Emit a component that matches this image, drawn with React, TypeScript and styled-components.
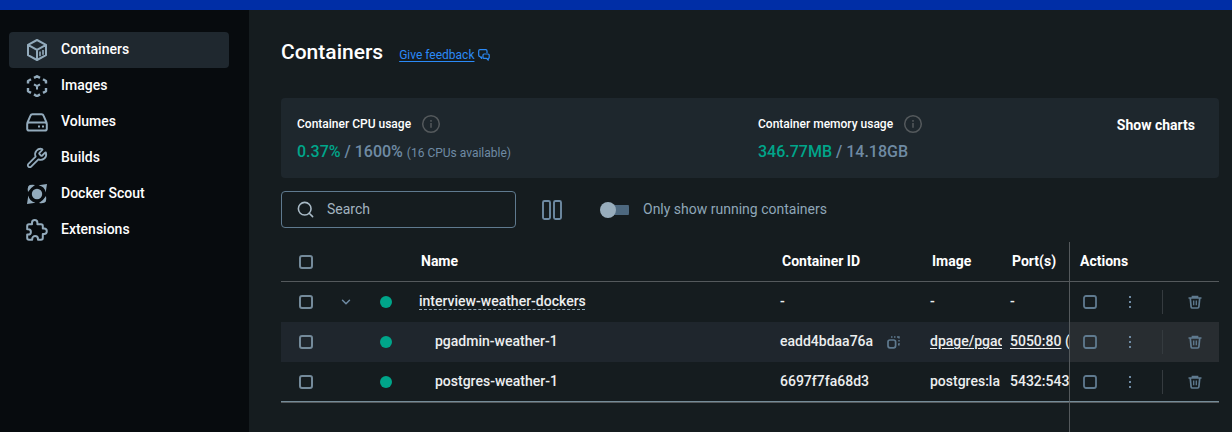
import React from "react";
import styled, { createGlobalStyle } from "styled-components";
import { Search, Wrench, ChevronDown } from "lucide-react";

const c = {
  bar: "#002ea6",
  side: "#070b0e",
  main: "#151c1f",
  panel: "#1e272d",
  active: "#1f282f",
  icon: "#93abbc",
  muted: "#6f8ba4",
  steel: "#5f7a8f",
  box: "#748a9a",
  green: "#00a58a",
  link: "#2b8af7",
  text: "#ffffff",
  cell: "#eceeef",
  line: "#54595c",
};

const Global = createGlobalStyle`
  * { box-sizing: border-box; }
  body {
    margin: 0;
    background: ${c.main};
    color: ${c.text};
    font-family: Roboto, "Liberation Sans", sans-serif;
    font-size: 14px;
    line-height: 20px;
  }
  button, input { font: inherit; color: inherit; }
  button { background: none; border: 0; padding: 0; cursor: pointer; }
  svg { display: block; flex: none; }
`;

const Shell = styled.div`
  display: flex;
  flex-direction: column;
  min-height: 100vh;
`;

const TopBar = styled.header`
  height: 10px;
  background: ${c.bar};
`;

const Columns = styled.div`
  display: flex;
  flex: 1;
`;

const Sidebar = styled.nav`
  flex: none;
  width: 249px;
  padding: 22px 20px 0 9px;
  background: ${c.side};
`;

const NavItem = styled.a<{ $active?: boolean }>`
  display: flex;
  align-items: center;
  gap: 13px;
  height: 36px;
  padding: 0 17px;
  border-radius: 4px;
  color: ${c.text};
  font-weight: 500;
  text-decoration: none;
  background: ${(p) => (p.$active ? c.active : "transparent")};
  svg { color: ${c.icon}; }
  span { padding-bottom: 2px; }
`;

const Main = styled.main`
  flex: 1;
  min-width: 0;
  padding: 28px 13px 0 32px;
`;

const TitleRow = styled.div`
  display: flex;
  align-items: center;
  gap: 16px;
  height: 28px;
  margin-bottom: 32px;
`;

const Title = styled.h1`
  margin: 0;
  font-size: 21px;
  line-height: 28px;
  font-weight: 500;
`;

const Feedback = styled.a`
  display: flex;
  align-items: center;
  gap: 4px;
  padding-top: 6px;
  color: ${c.link};
  font-size: 12px;
  line-height: 20px;
  text-decoration: none;
  span { text-decoration: underline; text-underline-offset: 2px; }
`;

const Usage = styled.section`
  display: grid;
  grid-template-columns: 1fr 1fr;
  gap: 16px;
  height: 80px;
  padding: 16px;
  border-radius: 4px;
  background: ${c.panel};
`;

const Half = styled.div`
  display: flex;
  justify-content: space-between;
  align-items: flex-start;
`;

const StatLabel = styled.div`
  display: flex;
  align-items: center;
  gap: 10px;
  font-size: 12px;
  font-weight: 500;
  svg { color: ${c.line}; }
`;

const StatValue = styled.div`
  margin-top: 6px;
  color: ${c.muted};
  font-size: 16px;
  font-weight: 500;
  line-height: 24px;
  b { color: ${c.green}; font-weight: 500; }
  small { font-size: 12px; font-weight: 400; }
`;

const ChartsButton = styled.button`
  padding: 1px 8px;
  font-weight: 700;
`;

const Toolbar = styled.div`
  display: flex;
  align-items: center;
  margin: 13px 0 14px;
`;

const SearchBox = styled.label`
  display: flex;
  align-items: center;
  gap: 12px;
  width: 235px;
  height: 37px;
  padding: 0 14px;
  border: 1px solid ${c.steel};
  border-radius: 4px;
  color: #a9bac6;
  input {
    flex: 1;
    min-width: 0;
    padding: 0 0 1px;
    border: 0;
    outline: 0;
    background: none;
  }
  input::placeholder { color: #a3b4c0; opacity: 1; }
`;

const ColumnsButton = styled.button`
  margin: 0 37px 0 25px;
  color: ${c.muted};
`;

const Toggle = styled.label`
  display: flex;
  align-items: center;
  gap: 14px;
  color: #8fa7b8;
  span { padding-bottom: 2px; }
`;

const Switch = styled.input`
  appearance: none;
  display: flex;
  align-items: center;
  width: 29px;
  height: 16px;
  margin: 0;
  background: linear-gradient(#4d687f, #4d687f) right center / 22px 10px no-repeat;
  border-radius: 5px;
  &::before {
    content: "";
    width: 16px;
    height: 16px;
    border-radius: 50%;
    background: #98adbc;
  }
`;

const Table = styled.table`
  width: 100%;
  table-layout: fixed;
  border-collapse: separate;
  border-spacing: 0;
`;

const Col = styled.col<{ $w?: number }>`
  width: ${(p) => (p.$w ? `${p.$w}px` : "auto")};
`;

const Head = styled.th<{ $pinned?: boolean }>`
  height: 40px;
  padding: 0 0 2px 10px;
  border-bottom: 1px solid ${c.line};
  border-left: ${(p) => (p.$pinned ? `1px solid ${c.line}` : "0")};
  text-align: left;
  font-weight: 700;
  white-space: nowrap;
`;

const Cell = styled.td<{ $indent?: boolean }>`
  height: 40px;
  padding: 0 0 2px ${(p) => (p.$indent ? 24 : 8)}px;
  color: ${c.cell};
  font-weight: 500;
  white-space: nowrap;
  overflow: hidden;
`;

const Mid = styled.td`
  padding: 0;
`;

const Row = styled.tr<{ $hover?: boolean; $last?: boolean }>`
  background: ${(p) => (p.$hover ? "#1f262d" : "transparent")};
  td { border-bottom: ${(p) => (p.$last ? "1px solid #748b98" : "0")}; }
`;

const MidHead = styled(Head)`
  padding: 0;
`;

const Center = styled.div`
  display: flex;
  align-items: center;
  justify-content: center;
  color: ${c.muted};
`;

const Check = styled.input`
  appearance: none;
  width: 14px;
  height: 14px;
  margin: 0;
  border: 2px solid ${c.box};
  border-radius: 3px;
`;

const Dot = styled.span`
  width: 12px;
  height: 12px;
  border-radius: 50%;
  background: ${c.green};
`;

const GroupName = styled.a`
  color: inherit;
  text-decoration: underline dashed ${c.icon} 1px;
  text-underline-offset: 3px;
  text-decoration-skip-ink: none;
`;

const CellLink = styled.a`
  color: inherit;
  text-decoration: underline;
  text-underline-offset: 2px;
`;

const IdWrap = styled.div`
  display: flex;
  align-items: center;
  gap: 14px;
  color: inherit;
  button { padding-top: 2px; color: ${c.steel}; }
`;

const Actions = styled.td<{ $hover?: boolean }>`
  padding: 0;
  border-left: 1px solid ${c.line};
  background: ${(p) => (p.$hover ? "#282d31" : "transparent")};
`;

const ActionBar = styled.div`
  display: grid;
  grid-template-columns: 40px 40px 12px 1px 1fr;
  align-items: center;
  justify-items: center;
  color: ${c.steel};
`;

const Divider = styled.i`
  grid-column: 4;
  width: 1px;
  height: 24px;
  background: #353b3f;
`;

const DeleteButton = styled.button`
  padding-left: 8px;
`;

const Tail = styled.td<{ $pinned?: boolean }>`
  height: 30px;
  padding: 0;
  border-top: 1px solid ${c.line};
  border-left: ${(p) => (p.$pinned ? `1px solid ${c.line}` : "0")};
`;

const NavSvg = ({ children }: { children: React.ReactNode }) => (
  <svg width="22" height="22" viewBox="0 0 22 22" fill="none" stroke="currentColor" strokeWidth="1.8" strokeLinejoin="round">
    {children}
  </svg>
);

const CubeIcon = () => (
  <NavSvg>
    <path d="M11 1 20 5.800v10.400L11 21 2 16.200V5.800z M2 5.800l9 5 9-5 M11 10.800V21" strokeWidth="2" />
    <path d="M14 12.500v4.800 M17 11v4.800" strokeWidth="1.600" />
  </NavSvg>
);

const ImagesIcon = () => (
  <NavSvg>
    <path d="M8 2.900l3-1.700 3 1.700 M8 19.400l3 1.800 3-1.800 M2 8.500V6l3-1.700 M20 8.500V6l-3-1.700 M2 13v3.200l3 1.700 M20 13v3.200l-3 1.700" strokeWidth="2.400" />
    <path d="M8 9.300l3 1.900 3-1.900 M11 11.200v3.400" strokeWidth="2" />
  </NavSvg>
);

const VolumesIcon = () => (
  <NavSvg>
    <path d="M1.200 12.200 4.600 4.400Q5 3.200 6.400 3.200h9.200q1.400 0 1.800 1.200l3.400 7.800 M3 11.400h16q1.800 0 1.800 1.800v4.600q0 1.800-1.800 1.800H3q-1.800 0-1.800-1.800v-4.600q0-1.800 1.800-1.800z" strokeWidth="2" />
    <path d="M12 15.500h2 M16 15.500h2" strokeWidth="2" />
  </NavSvg>
);

const ScoutIcon = () => (
  <svg width="22" height="22" viewBox="0 0 22 22" fill="currentColor">
    <circle cx="11" cy="11" r="5.200" />
    <path d="M21 1l-1.300 8.400A9 9 0 0 0 12.600 2.300z M1 21l1.300-8.400a9 9 0 0 0 7.100 7.100z" />
    <path d="M9 2Q3.500 1.300 2.300 3.300 1.300 5.300 2 9 4.500 4.800 9 2z M13 20q5.500.7 6.700-1.300 1-2 .3-5.700-2.500 4.200-7 7z" />
  </svg>
);

const PuzzleIcon = () => (
  <NavSvg>
    <path
      d="M6 5.200V3.700a2.700 2.700 0 0 1 5.400 0v1.500H15q1.800 0 1.800 1.800v2.600h1.300a2.700 2.700 0 0 1 0 5.400h-1.300v4q0 1.800-1.800 1.800h-3V20a2.900 2.900 0 0 0-5.800 0v.8H3q-1.800 0-1.800-1.800v-3.400h1a2.700 2.700 0 0 0 0-5.400h-1V7q0-1.800 1.800-1.800z"
      strokeWidth="2"
    />
  </NavSvg>
);

const FeedbackIcon = () => (
  <svg width="12" height="12" viewBox="0 0 12 12" fill="none" stroke="currentColor" strokeWidth="1.200" strokeLinejoin="round">
    <path d="M3.600 7.400v2L1.800 7.400Q.7 7.400.7 6V2Q.7.700 2 .7h5.800Q9 .7 9 2v2" />
    <path d="M6 5h4q1.200 0 1.200 1v2.400q0 1-1 1v1.800L8.600 9.400H6q-1 0-1-1V6q0-1 1-1z" />
  </svg>
);

const InfoIcon = () => (
  <svg width="20" height="20" viewBox="0 0 20 20" fill="none" stroke="currentColor" strokeWidth="1.500">
    <circle cx="10" cy="10" r="8.300" />
    <path d="M10 9v4.800 M10 6v1.800" />
  </svg>
);

const ColumnsIcon = () => (
  <svg width="22" height="22" viewBox="0 0 22 22" fill="none" stroke="currentColor" strokeWidth="1.900">
    <rect x="2" y="2" width="7" height="18" rx="1.500" />
    <rect x="13" y="2" width="7" height="18" rx="1.500" />
  </svg>
);

const CopyIcon = () => (
  <svg width="13" height="13" viewBox="0 0 13 13" fill="none" stroke="currentColor" strokeWidth="1.700">
    <rect x="1" y="4" width="7.600" height="7.800" rx="2" />
    <path d="M4 1h1.500 M7 1h1.500 M10 1h2v1.500 M12 4v1.500 M12 7v1.800h-1" strokeWidth="1.400" />
  </svg>
);

const StopIcon = () => (
  <svg width="14" height="14" viewBox="0 0 14 14" fill="none" stroke="currentColor" strokeWidth="1.800">
    <rect x="1" y="1" width="12" height="12" rx="2" />
  </svg>
);

const MoreIcon = () => (
  <svg width="14" height="14" viewBox="0 0 14 14" fill={c.muted}>
    <rect x="6" y="1" width="2" height="2" />
    <rect x="6" y="6" width="2" height="2" />
    <rect x="6" y="11" width="2" height="2" />
  </svg>
);

const TrashIcon = () => (
  <svg width="14" height="14" viewBox="0 0 14 14" fill="none" stroke="currentColor" strokeWidth="1.700">
    <path d="M.5 3h13 M4.500 2.500v-1h5v1 M2.300 3.500l.8 8.300q.1 1.200 1.300 1.200h5.200q1.200 0 1.300-1.200l.8-8.300" />
    <path d="M5.700 5.500v4.700 M8.300 5.500v4.700" strokeWidth="1.300" />
  </svg>
);

const nav = [
  { label: "Containers", icon: <CubeIcon />, active: true },
  { label: "Images", icon: <ImagesIcon /> },
  { label: "Volumes", icon: <VolumesIcon /> },
  { label: "Builds", icon: <Wrench size={22} strokeWidth={2} /> },
  { label: "Docker Scout", icon: <ScoutIcon /> },
  { label: "Extensions", icon: <PuzzleIcon /> },
];

type Item = {
  name: string;
  id: string;
  image: string;
  port: string;
  portRest?: string;
  group?: boolean;
  hover?: boolean;
  last?: boolean;
};

const items: Item[] = [
  { name: "interview-weather-dockers", id: "-", image: "-", port: "-", group: true },
  { name: "pgadmin-weather-1", id: "eadd4bdaa76a", image: "dpage/pgad", port: "5050:80", portRest: " (", hover: true },
  { name: "postgres-weather-1", id: "6697f7fa68d3", image: "postgres:la", port: "5432:543", last: true },
];

const ContainerRow = ({ item }: { item: Item }) => (
  <Row $hover={item.hover} $last={item.last}>
    <Mid>
      <Center><Check type="checkbox" aria-label={`Select ${item.name}`} /></Center>
    </Mid>
    <Mid>
      {item.group && (
        <Center><button aria-label="Collapse group"><ChevronDown size={14} strokeWidth={2.5} /></button></Center>
      )}
    </Mid>
    <Mid><Center><Dot /></Center></Mid>
    <Cell $indent={!item.group}>
      {item.group ? <GroupName href="#">{item.name}</GroupName> : item.name}
    </Cell>
    <Cell>
      {item.hover ? (
        <IdWrap>
          {item.id}
          <button aria-label="Copy container ID"><CopyIcon /></button>
        </IdWrap>
      ) : item.id}
    </Cell>
    <Cell>{item.hover ? <CellLink href="#">{item.image}</CellLink> : item.image}</Cell>
    <Cell>
      {item.hover ? <CellLink href="#">{item.port}</CellLink> : item.port}
      {item.portRest}
    </Cell>
    <Actions $hover={item.hover}>
      <ActionBar>
        <button aria-label="Stop"><StopIcon /></button>
        <button aria-label="More actions"><MoreIcon /></button>
        <Divider />
        <DeleteButton aria-label="Delete"><TrashIcon /></DeleteButton>
      </ActionBar>
    </Actions>
  </Row>
);

export default function App() {
  return (
    <Shell>
      <Global />
      <TopBar />
      <Columns>
        <Sidebar>
          {nav.map((n) => (
            <NavItem key={n.label} href="#" $active={n.active}>
              {n.icon}
              <span>{n.label}</span>
            </NavItem>
          ))}
        </Sidebar>
        <Main>
          <TitleRow>
            <Title>Containers</Title>
            <Feedback href="#"><span>Give feedback</span><FeedbackIcon /></Feedback>
          </TitleRow>
          <Usage>
            <Half>
              <div>
                <StatLabel>Container CPU usage <InfoIcon /></StatLabel>
                <StatValue><b>0.37%</b> / 1600% <small>(16 CPUs available)</small></StatValue>
              </div>
            </Half>
            <Half>
              <div>
                <StatLabel>Container memory usage <InfoIcon /></StatLabel>
                <StatValue><b>346.77MB</b> / 14.18GB</StatValue>
              </div>
              <ChartsButton>Show charts</ChartsButton>
            </Half>
          </Usage>
          <Toolbar>
            <SearchBox>
              <Search size={19} strokeWidth={2} />
              <input type="text" placeholder="Search" aria-label="Search" />
            </SearchBox>
            <ColumnsButton aria-label="Choose columns"><ColumnsIcon /></ColumnsButton>
            <Toggle>
              <Switch type="checkbox" role="switch" />
              <span>Only show running containers</span>
            </Toggle>
          </Toolbar>
          <Table>
            <colgroup>
              <Col $w={50} /><Col $w={30} /><Col $w={50} /><Col />
              <Col $w={150} /><Col $w={80} /><Col $w={67} /><Col $w={150} />
            </colgroup>
            <thead>
              <tr>
                <MidHead><Center><Check type="checkbox" aria-label="Select all" /></Center></MidHead>
                <MidHead />
                <MidHead />
                <Head>Name</Head>
                <Head>Container ID</Head>
                <Head>Image</Head>
                <Head>Port(s)</Head>
                <Head $pinned>Actions</Head>
              </tr>
            </thead>
            <tbody>
              {items.map((i) => <ContainerRow key={i.name} item={i} />)}
            </tbody>
            <tfoot>
              <tr><Tail colSpan={7} /><Tail $pinned /></tr>
            </tfoot>
          </Table>
        </Main>
      </Columns>
    </Shell>
  );
}
